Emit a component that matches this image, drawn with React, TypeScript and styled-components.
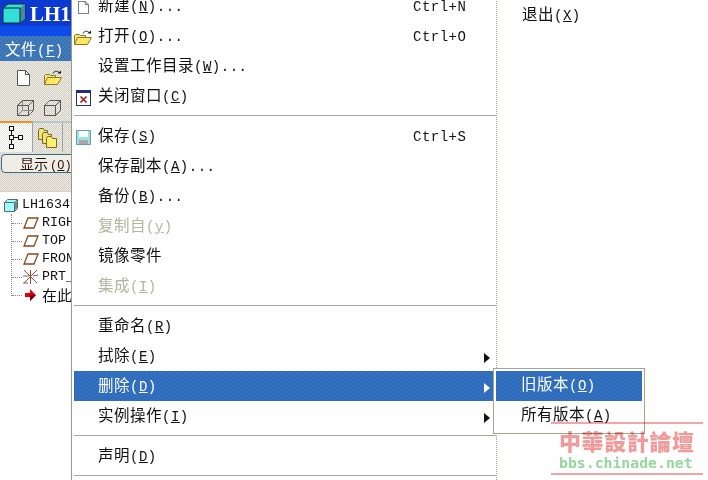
import React from 'react';
import styled, { createGlobalStyle, css } from 'styled-components';

const GlobalStyle = createGlobalStyle`
  html, body { margin: 0; padding: 0; background: #fff; }
  #root { width: 708px; height: 480px; }
  svg { flex: none; display: block; }
`;

const MONO = `"Liberation Mono", "Noto Sans CJK SC", monospace`;

const checker = (a: string, b: string) => css`
  background-color: ${a};
  background-image: conic-gradient(${a} 25%, ${b} 0 50%, ${a} 0 75%, ${b} 0);
  background-size: 2px 2px;
`;

const blueDots = (base: string, dot: string) => css`
  background-color: ${base};
  background-image: radial-gradient(circle at 1px 1px, ${dot} 0.6px, transparent 0.9px),
    radial-gradient(circle at 3px 3px, ${dot} 0.6px, transparent 0.9px);
  background-size: 4px 4px;
`;

type MenuEntry =
  | { kind: 'sep' }
  | {
      kind: 'item';
      label: string;
      key: string;
      dots?: boolean;
      shortcut?: string;
      icon?: React.ReactNode;
      disabled?: boolean;
      arrow?: boolean;
      active?: boolean;
    };

const DocIcon = ({ small }: { small?: boolean }) => (
  <svg width={small ? 11 : 13} height={small ? 13 : 16} viewBox="0 0 13 16" preserveAspectRatio="none">
    <path d="M.5.5h8l4 4v11H.5z" fill="#fff" stroke="#555" />
    <path d="M8.5.5v4h4" fill="none" stroke="#555" />
  </svg>
);

const FolderIcon = () => (
  <svg width="18" height="16" viewBox="0 0 18 16">
    <path d="M.5 14.5v-9l1-1h4l1 1h5v2" fill="#f4e27a" stroke="#8a7a30" />
    <path d="M.5 14.5l3-7h14l-4 7z" fill="#ffe860" stroke="#8a7a30" />
    <path d="M9 3.5C10 1 13 .5 15 2.5" fill="none" stroke="#222" />
    <path d="M13.5 3.5h3.5v-3z" fill="#111" />
  </svg>
);

const CloseWindowIcon = () => (
  <svg width="15" height="16" viewBox="0 0 15 16">
    <rect x=".5" y=".5" width="14" height="15" fill="#fff" stroke="#1c2f80" />
    <rect x="1" y="1" width="13" height="2" fill="#1c2f80" />
    <path d="M4.5 6.5l6 6M10.5 6.5l-6 6" stroke="#a01818" strokeWidth="1.6" />
  </svg>
);

const SaveIcon = () => (
  <svg width="15" height="15" viewBox="0 0 15 15">
    <path d="M.5.5h14v14H.5z" fill="#9fe0e8" stroke="#6a9aa8" />
    <rect x="3" y="1" width="9" height="6" fill="#f4ffff" />
    <rect x="3" y="10" width="9" height="4" fill="#a8a8a8" />
  </svg>
);

const WireCube = ({ solid }: { solid?: boolean }) => (
  <svg width="17" height="16" viewBox="0 0 17 16">
    <g fill="none" stroke="#555">
      <path d="M.5 5.5l5-5h11v10l-5 5H.5z" />
      <path d="M.5 5.5h11v10M11.5 5.5l5-5" />
      {!solid && <path d="M5.5.5v10h11M5.5 10.5l-5 5" stroke="#888" />}
    </g>
  </svg>
);

const TreeNodesIcon = () => (
  <svg width="15" height="24" viewBox="0 0 15 24">
    <g fill="#fff" stroke="#111">
      <rect x=".5" y=".5" width="4" height="4" />
      <rect x=".5" y="9.5" width="4" height="4" />
      <rect x=".5" y="18.5" width="4" height="4" />
      <rect x="9.5" y="9.5" width="4" height="4" />
    </g>
    <path d="M2.5 5v4M2.5 14v4M5 11.5h4" stroke="#111" />
  </svg>
);

const LayersIcon = () => (
  <svg width="19" height="20" viewBox="0 0 19 20">
    <g stroke="#7a6a20" fill="#f4e27a">
      <path d="M.5 2.5l1-2h4l1 2h3v9h-9z" />
      <path d="M4.5 6.5l1-2h4l1 2h3v9h-9z" />
      <path d="M8.5 10.5l1-2h4l1 2h4v9h-10z" fill="#ffee70" />
    </g>
  </svg>
);

const PartIcon = () => (
  <svg width="14" height="13" viewBox="0 0 14 13">
    <path d="M.5 3.5l3-3h10v9l-3 3H.5z" fill="#9ff" stroke="#666" />
    <path d="M.5 3.5h10v9M10.5 3.5l3-3" fill="none" stroke="#666" />
    <path d="M11 4l2-2v7l-2 2z" fill="#6a8a9a" />
  </svg>
);

const PlaneIcon = () => (
  <svg width="16" height="12" viewBox="0 0 16 12">
    <path d="M5 1h10l-4 10H1z" fill="#fff" stroke="#8a4a18" strokeWidth="1.3" />
  </svg>
);

const CsysIcon = () => (
  <svg width="17" height="16" viewBox="0 0 17 16">
    <path d="M2 1l13 13M15 1L2 14M8.5 1v14" stroke="#9a5028" fill="none" />
    <path d="M1 7h6M1 14h5M11 7l5-1" stroke="#667" fill="none" />
  </svg>
);

const RedArrowIcon = () => (
  <svg width="11" height="12" viewBox="0 0 11 12">
    <path d="M0 4h5V0l6 6-6 6V8H0z" fill="#e00010" />
    <path d="M5 12l6-6H5z" fill="#700010" />
  </svg>
);

const menu: MenuEntry[] = [
  { kind: 'item', label: '新建', key: 'N', dots: true, shortcut: 'Ctrl+N', icon: <DocIcon small /> },
  { kind: 'item', label: '打开', key: 'O', dots: true, shortcut: 'Ctrl+O', icon: <FolderIcon /> },
  { kind: 'item', label: '设置工作目录', key: 'W', dots: true },
  { kind: 'item', label: '关闭窗口', key: 'C', icon: <CloseWindowIcon /> },
  { kind: 'sep' },
  { kind: 'item', label: '保存', key: 'S', shortcut: 'Ctrl+S', icon: <SaveIcon /> },
  { kind: 'item', label: '保存副本', key: 'A', dots: true },
  { kind: 'item', label: '备份', key: 'B', dots: true },
  { kind: 'item', label: '复制自', key: 'y', disabled: true },
  { kind: 'item', label: '镜像零件', key: '' },
  { kind: 'item', label: '集成', key: 'I', disabled: true },
  { kind: 'sep' },
  { kind: 'item', label: '重命名', key: 'R' },
  { kind: 'item', label: '拭除', key: 'E', arrow: true },
  { kind: 'item', label: '删除', key: 'D', arrow: true, active: true },
  { kind: 'item', label: '实例操作', key: 'I', arrow: true },
  { kind: 'sep' },
  { kind: 'item', label: '声明', key: 'D' },
  { kind: 'sep' },
];

const treeItems = [
  { icon: <PlaneIcon />, label: 'RIGHT' },
  { icon: <PlaneIcon />, label: 'TOP' },
  { icon: <PlaneIcon />, label: 'FRONT' },
  { icon: <CsysIcon />, label: 'PRT_CSYS' },
  { icon: <RedArrowIcon />, label: '在此插入', cjk: true },
];

const ItemLabel: React.FC<{ label: string; hotkey: string; dots?: boolean }> = ({ label, hotkey, dots }) => (
  <LabelText>
    <Cjk>{label}</Cjk>
    {hotkey && (
      <Latin>
        (<u>{hotkey}</u>){dots ? '...' : ''}
      </Latin>
    )}
  </LabelText>
);

const App: React.FC = () => (
  <Screen>
    <GlobalStyle />
    <LeftPanel>
      <TitleBar>
        <svg width="24" height="21" viewBox="0 0 24 21">
          <path d="M1 5l5-4h17v15l-5 4H1z" fill="#33e0d8" stroke="#123" />
          <path d="M18 5l5-4v15l-5 4z" fill="#4a8a9a" />
          <path d="M1 5h17v15" fill="none" stroke="#123" />
        </svg>
        <TitleText>LH1634</TitleText>
      </TitleBar>
      <MenuBar>
        <MenuBarText>
          <Cjk>文件</Cjk>
          <Latin>
            (<u>F</u>)
          </Latin>
        </MenuBarText>
      </MenuBar>
      <Toolbar>
        <ToolGrid>
          <DocIcon />
          <FolderIcon />
          <WireCube />
          <WireCube solid />
        </ToolGrid>
      </Toolbar>
      <TabRow>
        <Tab $active>
          <TreeNodesIcon />
        </Tab>
        <Tab>
          <LayersIcon />
        </Tab>
        <Tab />
      </TabRow>
      <ButtonStrip>
        <ShowButton>
          <ButtonCjk>显示</ButtonCjk>
          <ButtonLatin>
            (<u>O</u>)
          </ButtonLatin>
        </ShowButton>
      </ButtonStrip>
      <Tree>
        <TreeRoot>
          <PartIcon />
          <TreeText>LH1634.PRT</TreeText>
        </TreeRoot>
        <TreeBranch>
          {treeItems.map((item) => (
            <TreeRow key={item.label}>
              <TreeIconBox>{item.icon}</TreeIconBox>
              <TreeText $cjk={item.cjk}>{item.label}</TreeText>
            </TreeRow>
          ))}
        </TreeBranch>
      </Tree>
    </LeftPanel>

    <Menu>
      {menu.map((entry, i) =>
        entry.kind === 'sep' ? (
          <Separator key={i} />
        ) : (
          <MenuRow key={i} $active={entry.active} $disabled={entry.disabled}>
            <IconCell>{entry.icon}</IconCell>
            <ItemLabel label={entry.label} hotkey={entry.key} dots={entry.dots} />
            <Shortcut>{entry.shortcut}</Shortcut>
            {entry.arrow && <Arrow $active={entry.active} />}
          </MenuRow>
        ),
      )}
    </Menu>

    <SideMenu>
      <SideItem>
        <ItemLabel label="退出" hotkey="X" />
      </SideItem>
    </SideMenu>

    <Submenu>
      <SubmenuRow $active>
        <ItemLabel label="旧版本" hotkey="O" />
      </SubmenuRow>
      <SubmenuRow>
        <ItemLabel label="所有版本" hotkey="A" />
      </SubmenuRow>
    </Submenu>

    <Watermark>
      <WatermarkTitle>中華設計論壇</WatermarkTitle>
      <WatermarkUrl>bbs.chinade.net</WatermarkUrl>
    </Watermark>
  </Screen>
);

const Screen = styled.div`
  position: relative;
  display: flex;
  width: 708px;
  height: 480px;
  overflow: hidden;
  background: #fdfefd;
  font-family: ${MONO};
  color: #111;
`;

const Cjk = styled.span`
  font-family: "Noto Sans CJK SC", sans-serif;
  font-size: 15.5px;
  letter-spacing: 0.5px;
`;

const Latin = styled.span`
  font-family: "Liberation Mono", monospace;
  font-size: 14px;
  letter-spacing: 0.5px;
`;

const ButtonCjk = styled(Cjk)`
  font-size: 14px;
  letter-spacing: 0;
  margin-right: 2px;
`;

const ButtonLatin = styled(Latin)`
  font-size: 12px;
  letter-spacing: 0;
`;

const LabelText = styled.span`
  display: block;
  white-space: nowrap;
  line-height: 26px;
  padding-bottom: 4px;
`;

const LeftPanel = styled.div`
  flex: none;
  display: flex;
  flex-direction: column;
  width: 71px;
  height: 480px;
  overflow: hidden;
  border-right: 1px solid #9c9890;
`;

const TitleBar = styled.div`
  display: flex;
  align-items: flex-start;
  gap: 4px;
  height: 36px;
  padding: 3px 0 0 2px;
  box-sizing: border-box;
  background: linear-gradient(#0c3ad0 0 72%, #0c4ce8 72%);
`;

const TitleText = styled.span`
  font-family: "Liberation Serif", serif;
  font-size: 21px;
  font-weight: 700;
  line-height: 22px;
  color: #fff;
  white-space: nowrap;
`;

const MenuBar = styled.div`
  ${blueDots('#3e6ac0', '#3a90a8')}
  height: 25px;
  padding-left: 5px;
  color: #fff;
`;

const MenuBarText = styled.span`
  line-height: 24px;
  white-space: nowrap;
`;

const Toolbar = styled.div`
  ${checker('#f2efe8', '#cfccc2')}
  height: 60px;
  box-sizing: border-box;
  padding: 9px 0 0 17px;
`;

const ToolGrid = styled.div`
  display: grid;
  grid-template-columns: 27px 20px;
  grid-template-rows: 30px 18px;
  align-items: start;
`;

const TabRow = styled.div`
  ${checker('#f2efe8', '#d0ccc2')}
  display: flex;
  height: 31px;
`;

const Tab = styled.div<{ $active?: boolean }>`
  flex: none;
  display: flex;
  align-items: center;
  justify-content: center;
  box-sizing: border-box;
  width: ${(p) => (p.$active ? 33 : 30)}px;
  border-top: 2px solid ${(p) => (p.$active ? '#f09020' : '#b8c8c8')};
  border-right: 1px solid #9aa8a8;
  ${(p) => (p.$active ? checker('#ffffff', '#e8e6e0') : '')}
`;

const ButtonStrip = styled.div`
  ${checker('#f0ede6', '#d0ccc2')}
  height: 40px;
  box-sizing: border-box;
  padding: 2px 0 0 1px;
  border-bottom: 1px solid #d8d0c8;
`;

const ShowButton = styled.div`
  box-sizing: border-box;
  width: 90px;
  height: 19px;
  padding-left: 18px;
  line-height: 16px;
  white-space: nowrap;
  background: #f0ede6;
  border: 1px solid #3a6a80;
  border-radius: 4px;
  color: #2a1408;
`;

const Tree = styled.div`
  flex: 1;
  padding: 4px 0 0 4px;
  background: #fff;
`;

const TreeRoot = styled.div`
  display: flex;
  align-items: center;
  gap: 4px;
  height: 18px;
  white-space: nowrap;
`;

const TreeBranch = styled.div`
  position: relative;
  margin: 0 0 0 7px;
  height: 82px;
  border-left: 1px dotted #888;
`;

const TreeRow = styled.div`
  display: flex;
  align-items: center;
  height: 18px;
  white-space: nowrap;

  &::before {
    content: '';
    flex: none;
    width: 10px;
    border-top: 1px dotted #888;
  }
`;

const TreeIconBox = styled.span`
  flex: none;
  display: flex;
  align-items: center;
  justify-content: center;
  width: 17px;
  margin-right: 3px;
`;

const TreeText = styled.span<{ $cjk?: boolean }>`
  font-family: ${(p) => (p.$cjk ? '"Noto Sans CJK SC", sans-serif' : MONO)};
  font-size: ${(p) => (p.$cjk ? 15 : 13.3)}px;
  line-height: 18px;
  color: #111;
`;

const Menu = styled.div`
  flex: none;
  box-sizing: border-box;
  width: 425px;
  height: 489px;
  margin-top: -9px;
  padding-left: 2px;
  background: #fdfefd;
  border-right: 1px dotted #b0a878;
`;

const MenuRow = styled.div<{ $active?: boolean; $disabled?: boolean }>`
  display: grid;
  grid-template-columns: 24px 315px 71px 12px;
  align-items: center;
  height: 30px;
  color: ${(p) => (p.$disabled ? '#b4b4a0' : '#111')};
  ${(p) => (p.$active ? blueDots('#3266c4', '#2f80b0') : '')}
  ${(p) => (p.$active ? 'color: #fff;' : '')}
`;

const IconCell = styled.span`
  display: flex;
  justify-content: center;
  padding-right: 6px;
`;

const Shortcut = styled.span`
  display: block;
  padding-bottom: 2px;
  font-family: "Liberation Mono", monospace;
  font-size: 14px;
  letter-spacing: 0.5px;
`;

const Arrow = styled.span<{ $active?: boolean }>`
  grid-column: 4;
  width: 0;
  height: 0;
  border-left: 6px solid ${(p) => (p.$active ? '#fff' : '#111')};
  border-top: 5px solid transparent;
  border-bottom: 5px solid transparent;
`;

const Separator = styled.div`
  height: 1px;
  margin: 4px 0 5px;
  background: #a8a4a0;
`;

const SideMenu = styled.div`
  flex: 1;
  padding: 1px 0 0 25px;
`;

const SideItem = styled.div`
  display: flex;
  align-items: center;
  height: 30px;
`;

const Submenu = styled.div`
  position: absolute;
  left: 493px;
  top: 368px;
  box-sizing: border-box;
  width: 152px;
  height: 66px;
  padding: 2px;
  background: #fdfefd;
  border: 1px solid #a8a488;
`;

const SubmenuRow = styled.div<{ $active?: boolean }>`
  display: flex;
  align-items: center;
  height: 30px;
  padding-left: 25px;
  ${(p) => (p.$active ? blueDots('#3266c4', '#2f80b0') : '')}
  ${(p) => (p.$active ? 'color: #fff;' : '')}
`;

const Watermark = styled.div`
  position: absolute;
  left: 551px;
  top: 422px;
  box-sizing: border-box;
  width: 152px;
  height: 53px;
  padding: 2px 0 0 8px;
  border-top: 2px solid #f4a8a8;
  border-bottom: 2px solid #f4a8a8;
  mix-blend-mode: multiply;
`;

const WatermarkTitle = styled.div`
  font-family: "Noto Sans CJK TC", sans-serif;
  font-size: 22px;
  font-weight: 900;
  line-height: 29px;
  letter-spacing: 0.6px;
  color: #f29c9c;
  white-space: nowrap;
`;

const WatermarkUrl = styled.div`
  font-family: "DejaVu Sans Mono", monospace;
  font-size: 14.8px;
  font-weight: 700;
  line-height: 16px;
  color: #96d8a0;
  white-space: nowrap;
`;

export default App;
